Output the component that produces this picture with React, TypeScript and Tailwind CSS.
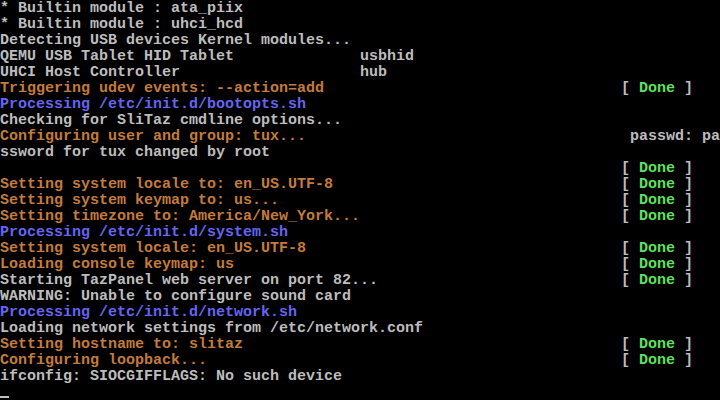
type Tone = 'grey' | 'orange' | 'blue';

interface Line {
    text: string;
    tone?: Tone;
    right?: string;
    done?: boolean;
}

const toneClass: Record<Tone, string> = {
    grey: 'text-[#bdbdbd]',
    orange: 'text-[#c47b3c]',
    blue: 'text-[#6565f2]',
};

const lines: Line[] = [
    { text: '* Builtin module : ata_piix' },
    { text: '* Builtin module : uhci_hcd' },
    { text: 'Detecting USB devices Kernel modules...' },
    { text: 'QEMU USB Tablet HID Tablet', right: 'usbhid' },
    { text: 'UHCI Host Controller', right: 'hub' },
    { text: 'Triggering udev events: --action=add', tone: 'orange', done: true },
    { text: 'Processing /etc/init.d/bootopts.sh', tone: 'blue' },
    { text: 'Checking for SliTaz cmdline options...' },
    { text: 'Configuring user and group: tux...', tone: 'orange' },
    { text: 'ssword for tux changed by root' },
    { text: '', done: true },
    { text: 'Setting system locale to: en_US.UTF-8', tone: 'orange', done: true },
    { text: 'Setting system keymap to: us...', tone: 'orange', done: true },
    { text: 'Setting timezone to: America/New_York...', tone: 'orange', done: true },
    { text: 'Processing /etc/init.d/system.sh', tone: 'blue' },
    { text: 'Setting system locale: en_US.UTF-8', tone: 'orange', done: true },
    { text: 'Loading console keymap: us', tone: 'orange', done: true },
    { text: 'Starting TazPanel web server on port 82...', done: true },
    { text: 'WARNING: Unable to configure sound card' },
    { text: 'Processing /etc/init.d/network.sh', tone: 'blue' },
    { text: 'Loading network settings from /etc/network.conf' },
    { text: 'Setting hostname to: slitaz', tone: 'orange', done: true },
    { text: 'Configuring loopback...', tone: 'orange', done: true },
    { text: 'ifconfig: SIOCGIFFLAGS: No such device' },
];

export default function App() {
    return (
        <div className="h-[400px] w-[720px] overflow-hidden bg-black pt-px font-['Liberation_Mono',monospace] text-[15px] font-bold leading-[16px] text-[#bdbdbd]">
            {lines.map((l, i) => (
                <div key={i} className="flex h-[16px] whitespace-pre">
                    <span className={`w-[360px] shrink-0 ${toneClass[l.tone ?? 'grey']}`}>{l.text}</span>
                    {l.right && <span>{l.right}</span>}
                    {i === 8 && <span className="ml-[270px]">passwd: pa</span>}
                    {l.done && (
                        <span className="ml-[261px]">
                            [ <span className="text-[#5fe05f]">Done</span> ]
                        </span>
                    )}
                </div>
            ))}
            <div className="flex h-[15px] items-end">
                <div className="mb-[2px] h-[2px] w-[9px] bg-[#bdbdbd]" />
            </div>
        </div>
    );
}
